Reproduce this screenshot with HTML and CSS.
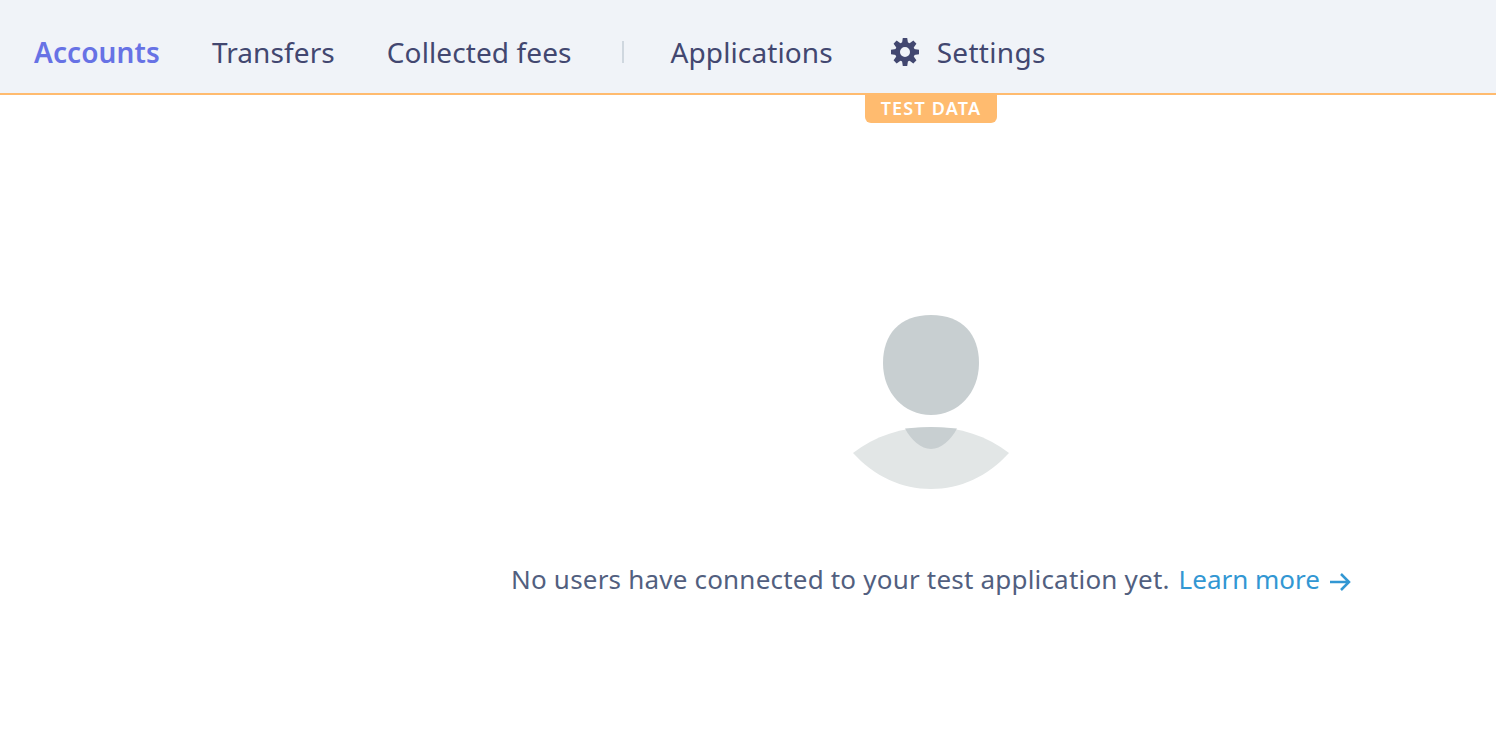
FILE: index.html
```html
<!DOCTYPE html>
<html lang="en">
<head>
<meta charset="utf-8">
<title>Accounts</title>
<link rel="stylesheet" href="styles.css">
</head>
<body>
<header class="topbar">
  <nav class="nav">
    <a class="nav-link is-active" href="#">Accounts</a>
    <a class="nav-link" href="#">Transfers</a>
    <a class="nav-link" href="#">Collected fees</a>
    <span class="nav-sep"></span>
    <a class="nav-link" href="#">Applications</a>
    <a class="nav-link nav-settings" href="#">
      <svg class="gear" viewBox="0 0 28 28" aria-hidden="true">
        <path fill-rule="evenodd" d="M14 4a10 10 0 1 0 0 20a10 10 0 1 0 0-20zM14 9a5 5 0 1 1 0 10a5 5 0 1 1 0-10z"/>
        <path d="M11.8 0h4.4l.8 5h-6z"/>
        <path transform="rotate(45 14 14)" d="M11.8 0h4.4l.8 5h-6z"/>
        <path transform="rotate(90 14 14)" d="M11.8 0h4.4l.8 5h-6z"/>
        <path transform="rotate(135 14 14)" d="M11.8 0h4.4l.8 5h-6z"/>
        <path transform="rotate(180 14 14)" d="M11.8 0h4.4l.8 5h-6z"/>
        <path transform="rotate(225 14 14)" d="M11.8 0h4.4l.8 5h-6z"/>
        <path transform="rotate(270 14 14)" d="M11.8 0h4.4l.8 5h-6z"/>
        <path transform="rotate(315 14 14)" d="M11.8 0h4.4l.8 5h-6z"/>
      </svg>
      <span>Settings</span>
    </a>
  </nav>
</header>
<div class="layout">
  <main class="main">
    <div class="badge">TEST DATA</div>
    <svg class="person" viewBox="0 0 158 174" aria-hidden="true">
      <path class="person-head" d="M79 0C111 0 127 20 127 48C127 78 106 100 79 100C52 100 31 78 31 48C31 20 47 0 79 0Z"/>
      <path class="person-body" d="M1 138C23 121 50 112 79 112C108 112 135 121 157 138C135 162 108 174 79 174C50 174 23 162 1 138Z"/>
      <path class="person-head" d="M53 113.5Q79 110.5 105 113.5C99 125 89 134 79 134C69 134 59 125 53 113.5Z"/>
    </svg>
    <p class="empty">No users have connected to your test application yet. <a class="learn" href="#">Learn more<svg class="arrow" viewBox="0 0 22 20" aria-hidden="true"><path d="M1 10H20M12 2l8 8-8 8"/></svg></a></p>
  </main>
</div>
</body>
</html>
```
FILE: styles.css
```css
* { box-sizing: border-box; }
html, body { margin: 0; height: 100%; }
body {
  background: #fff;
  font-family: "Noto Sans", "Open Sans", sans-serif;
  overflow: hidden;
}
.topbar {
  height: 95px;
  background: #f0f3f8;
  border-bottom: 2px solid #ffbb6f;
  display: flex;
  align-items: center;
  padding-left: 34px;
  padding-top: 11px;
}
.nav { display: flex; align-items: center; }
.nav-link {
  color: #424770;
  font-size: 28px;
  letter-spacing: 0.1px;
  line-height: 36px;
  text-decoration: none;
  margin-right: 52px;
}
.is-active { color: #6772e5; font-weight: 600; }
.nav-sep {
  width: 2px;
  height: 22px;
  background: #cfd7df;
  margin: 0 47px 0 -2px;
}
.nav-settings { display: flex; align-items: center; margin: 0 0 0 6px; gap: 18px; letter-spacing: 0.3px; }
.gear { width: 28px; height: 28px; fill: #424770; }
.layout { display: grid; grid-template-columns: 366px 1fr; }
.main {
  grid-column: 2;
  display: flex;
  flex-direction: column;
  align-items: center;
}
.badge {
  background: #ffbb6f;
  color: #fff;
  font-size: 18px;
  letter-spacing: 1.2px;
  font-weight: 600;
  line-height: 26px;
  padding: 0 16px 2px;
  border-radius: 0 0 6px 6px;
}
.person { width: 158px; height: 174px; margin-top: 192px; }
.person-head { fill: #c8cfd1; }
.person-body { fill: #e2e6e6; }
.empty {
  margin: 72px 0 0;
  color: #525f7f;
  font-size: 26px;
  letter-spacing: 0.2px;
  line-height: 36px;
  white-space: nowrap;
}
.learn { color: #3297d3; text-decoration: none; letter-spacing: 0; margin-left: 2px; }
.arrow {
  width: 22px;
  height: 20px;
  margin-left: 9px;
  vertical-align: -3px;
  fill: none;
  stroke: #3297d3;
  stroke-width: 2.5;
}
```
